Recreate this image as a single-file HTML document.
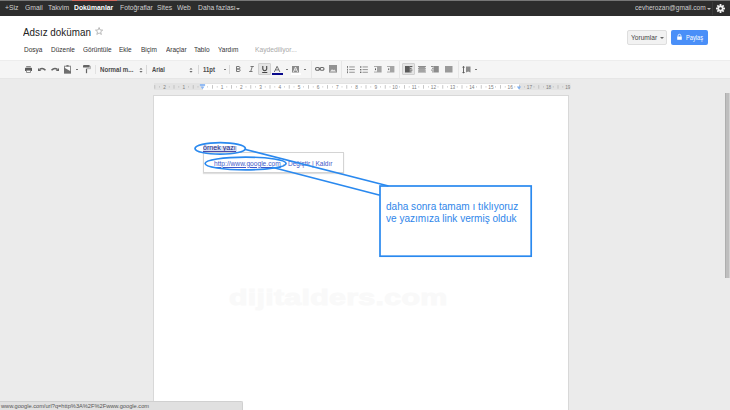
<!DOCTYPE html>
<html><head><meta charset="utf-8">
<style>
*{margin:0;padding:0;box-sizing:border-box}
html,body{width:730px;height:410px;overflow:hidden;background:#ebebeb;font-family:"Liberation Sans",sans-serif;position:relative}
.a{position:absolute;white-space:nowrap;line-height:1}
.b{position:absolute}
.sep{position:absolute;top:65px;width:1px;height:8.6px;background:#d8d8d8}
.sepf{position:absolute;top:60.5px;width:1px;height:17px;background:#e6e6e6}
.dd{position:absolute;width:0;height:0;border-left:2px solid transparent;border-right:2px solid transparent;border-top:2px solid #777}
svg{position:absolute;overflow:visible}
</style></head><body>
<div class="b" style="left:0;top:0;width:730px;height:16px;background:#2d2d2d"></div>
<div class="b" style="left:0;top:0;width:730px;height:1.2px;background:#777"></div>
<div class="b" style="left:71.5px;top:0;width:45px;height:1.4px;background:#d2695e"></div>
<span class="a" style="left:5px;top:4.2px;font-size:7.4px;color:#d0d0d0;transform:scaleX(0.919);transform-origin:0 0;">+Siz</span>
<span class="a" style="left:25px;top:4.2px;font-size:7.4px;color:#d0d0d0;transform:scaleX(0.919);transform-origin:0 0;">Gmail</span>
<span class="a" style="left:48px;top:4.2px;font-size:7.4px;color:#d0d0d0;transform:scaleX(0.919);transform-origin:0 0;">Takvim</span>
<span class="a" style="left:120px;top:4.2px;font-size:7.4px;color:#d0d0d0;transform:scaleX(0.919);transform-origin:0 0;">Fotoğraflar</span>
<span class="a" style="left:157px;top:4.2px;font-size:7.4px;color:#d0d0d0;transform:scaleX(0.919);transform-origin:0 0;">Sites</span>
<span class="a" style="left:177px;top:4.2px;font-size:7.4px;color:#d0d0d0;transform:scaleX(0.919);transform-origin:0 0;">Web</span>
<span class="a" style="left:198px;top:4.2px;font-size:7.4px;color:#d0d0d0;transform:scaleX(0.919);transform-origin:0 0;">Daha fazlası</span>
<span class="a" style="left:74px;top:4.2px;font-size:7.4px;color:#fff;transform:scaleX(0.919);transform-origin:0 0;font-weight:bold;">Dokümanlar</span>
<div class="dd" style="left:235.5px;top:8px;border-top-color:#bbb"></div>
<span class="a" style="left:634.8px;top:4.2px;font-size:7.4px;color:#d0d0d0;transform:scaleX(0.891);transform-origin:0 0;">cevherozan@gmail.com</span>
<div class="dd" style="left:706.5px;top:8px;border-top-color:#bbb"></div>
<div class="b" style="left:712px;top:2px;width:1px;height:13px;background:#3a3a3a"></div>
<svg style="left:715.5px;top:3.5px" width="9" height="9" viewBox="0 0 10 10"><g fill="#f0f0f0"><circle cx="5" cy="5" r="3.3"/><rect x="4" y="0" width="2" height="10" transform="rotate(0 5 5)"/><rect x="4" y="0" width="2" height="10" transform="rotate(45 5 5)"/><rect x="4" y="0" width="2" height="10" transform="rotate(90 5 5)"/><rect x="4" y="0" width="2" height="10" transform="rotate(135 5 5)"/></g><circle cx="5" cy="5" r="1.4" fill="#2d2d2d"/></svg>
<div class="b" style="left:0;top:16px;width:730px;height:44px;background:#fff"></div>
<span class="a" style="left:23px;top:26.5px;font-size:11px;color:#222;transform:scaleX(0.895);transform-origin:0 0;">Adsız doküman</span>
<svg style="left:95.4px;top:27.4px" width="8.2" height="8.2" viewBox="0 0 10 10"><path d="M5 .6 6.2 3.6 9.4 3.8 6.9 5.9 7.8 9.1 5 7.3 2.2 9.1 3.1 5.9.6 3.8 3.8 3.6Z" fill="none" stroke="#a8a8a8" stroke-width=".95" stroke-linejoin="round"/></svg>
<span class="a" style="left:24px;top:45.5px;font-size:7.3px;color:#333;transform:scaleX(0.89);transform-origin:0 0;">Dosya</span>
<span class="a" style="left:50.8px;top:45.5px;font-size:7.3px;color:#333;transform:scaleX(0.89);transform-origin:0 0;">Düzenle</span>
<span class="a" style="left:83px;top:45.5px;font-size:7.3px;color:#333;transform:scaleX(0.89);transform-origin:0 0;">Görüntüle</span>
<span class="a" style="left:119.2px;top:45.5px;font-size:7.3px;color:#333;transform:scaleX(0.89);transform-origin:0 0;">Ekle</span>
<span class="a" style="left:140.8px;top:45.5px;font-size:7.3px;color:#333;transform:scaleX(0.89);transform-origin:0 0;">Biçim</span>
<span class="a" style="left:165.5px;top:45.5px;font-size:7.3px;color:#333;transform:scaleX(0.89);transform-origin:0 0;">Araçlar</span>
<span class="a" style="left:194px;top:45.5px;font-size:7.3px;color:#333;transform:scaleX(0.89);transform-origin:0 0;">Tablo</span>
<span class="a" style="left:218.3px;top:45.5px;font-size:7.3px;color:#333;transform:scaleX(0.89);transform-origin:0 0;">Yardım</span>
<span class="a" style="left:255px;top:45.5px;font-size:7.3px;color:#aaa;transform:scaleX(0.92);transform-origin:0 0;">Kaydediliyor...</span>
<div class="b" style="left:627px;top:30px;width:40px;height:15px;background:#f2f2f2;border:1px solid #dedede;border-radius:2px"></div>
<span class="a" style="left:631px;top:34.2px;font-size:7.0px;color:#444;transform:scaleX(0.94);transform-origin:0 0;">Yorumlar</span>
<div class="dd" style="left:659.5px;top:37px;border-top-color:#666"></div>
<div class="b" style="left:671px;top:30px;width:37px;height:15px;background:#4a8ff8;border-radius:2px"></div>
<svg style="left:676.5px;top:33.8px" width="5" height="6" viewBox="0 0 5 6"><path d="M1.1 2.6V1.7a1.4 1.4 0 0 1 2.8 0v.9" fill="none" stroke="#fff" stroke-width=".8"/><rect x=".2" y="2.5" width="4.6" height="3.3" fill="#fff"/></svg>
<span class="a" style="left:685.6px;top:34.5px;font-size:6.3px;color:#fff;transform:scaleX(0.9);transform-origin:0 0;">Paylaş</span>
<div class="b" style="left:0;top:59.5px;width:730px;height:19.3px;background:#f5f5f5;border-top:1px solid #ededed;border-bottom:1px solid #e6e6e6"></div>
<svg style="left:24.9px;top:66px" width="7" height="7" viewBox="0 0 7 7"><rect x="1.2" y="0" width="4.6" height="1.3" fill="#8a8a8a"/><rect x="0" y="1.7" width="7" height="3.3" rx=".6" fill="#575757"/><rect x="1.6" y="4.2" width="3.8" height="2.2" fill="#f8f8f8" stroke="#7a7a7a" stroke-width=".8"/></svg>
<svg style="left:38px;top:66.8px" width="8" height="4" viewBox="0 0 8 4"><path d="M1.6 2.4Q4.6 .1 7.5 3.3" fill="none" stroke="#646464" stroke-width="1.5"/><path d="M0 .9 3.3 3.9 0 3.9Z" fill="#646464"/></svg>
<svg style="left:51px;top:66.8px" width="8" height="4" viewBox="0 0 8 4"><path d="M6.4 2.4Q3.4 .1 .5 3.3" fill="none" stroke="#646464" stroke-width="1.5"/><path d="M8 .9 4.7 3.9 8 3.9Z" fill="#646464"/></svg>
<svg style="left:64.1px;top:65.1px" width="7" height="8.4" viewBox="0 0 7 8.4"><rect x=".5" y="1.2" width="6" height="6.7" fill="#fafafa" stroke="#8a8a8a" stroke-width="1"/><rect x="2.4" y="0" width="2.2" height="1.6" fill="#777"/><path d="M0 2.6 7 6.6V8.4H0Z" fill="#6e6e6e"/></svg>
<div class="b" style="left:76px;top:69px;width:2px;height:1px;background:#777"></div>
<svg style="left:83px;top:65.4px" width="8" height="8.2" viewBox="0 0 8 8.2"><rect x="0" y="0" width="6.7" height="2.5" rx=".5" fill="#646464"/><path d="M6.7 1.2H7.4V3.7H3.5V4.3" fill="none" stroke="#9a9a9a" stroke-width=".8"/><rect x="2.9" y="4" width="1.2" height="4.2" fill="#646464"/></svg>
<div class="sep" style="left:95px;background:#e2e2e2"></div>
<span class="a" style="left:100.2px;top:66.5px;font-size:6.6px;color:#4a4a4a;transform:scaleX(0.93);transform-origin:0 0;font-weight:bold;">Normal m...</span>
<svg style="left:138.8px;top:66.5px" width="4" height="6" viewBox="0 0 4 6"><path d="M.4 2.5 2 1 3.6 2.5ZM.4 3.9 2 5.8 3.6 3.9Z" fill="#6a6a6a"/></svg>
<div class="sep" style="left:146px"></div>
<span class="a" style="left:151.6px;top:66.5px;font-size:6.6px;color:#4a4a4a;transform:scaleX(0.88);transform-origin:0 0;font-weight:bold;">Arial</span>
<svg style="left:188.8px;top:66.5px" width="4" height="6" viewBox="0 0 4 6"><path d="M.4 2.5 2 1 3.6 2.5ZM.4 3.9 2 5.8 3.6 3.9Z" fill="#6a6a6a"/></svg>
<div class="sep" style="left:197.5px"></div>
<span class="a" style="left:203px;top:66.5px;font-size:6.6px;color:#4a4a4a;transform:scaleX(0.9);transform-origin:0 0;font-weight:bold;">11pt</span>
<div class="b" style="left:224.2px;top:69px;width:2px;height:1px;background:#777"></div>
<div class="sep" style="left:228.8px"></div>
<svg style="left:235.8px;top:66.3px" width="5" height="6" viewBox="0 0 5 6"><path d="M.5 .5H3a1.3 1.3 0 0 1 0 2.5H.5ZM.5 3H3.2a1.3 1.3 0 0 1 0 2.5H.5Z" fill="none" stroke="#777" stroke-width="1"/></svg>
<svg style="left:249px;top:66.3px" width="5" height="6" viewBox="0 0 5 6"><path d="M1.5 .5H4.8M.2 5.5H3.5M3.3 .5 1.7 5.5" fill="none" stroke="#777" stroke-width="1"/></svg>
<div class="b" style="left:258.2px;top:63.2px;width:13.3px;height:12px;background:#e5e5e5;border:1px solid #d0d0d0;border-radius:1px"></div>
<svg style="left:262px;top:66px" width="5.5" height="7" viewBox="0 0 5.5 7"><path d="M.8 0V3.2a2 2 0 0 0 3.9 0V0" fill="none" stroke="#444" stroke-width="1.1"/><rect x=".2" y="6" width="5.1" height="1" fill="#444"/></svg>
<svg style="left:274.2px;top:65.8px" width="6.2" height="6" viewBox="0 0 6.2 6"><path d="M.3 6 3.1 .3 5.9 6M1.4 3.9H4.8" fill="none" stroke="#666" stroke-width=".9"/></svg>
<div class="b" style="left:272.2px;top:73px;width:10.7px;height:1.7px;background:#0a0a8c"></div>
<div class="b" style="left:285.8px;top:69px;width:2px;height:1px;background:#777"></div>
<svg style="left:292px;top:65.8px" width="7" height="7" viewBox="0 0 7 7"><rect x="0" y="0" width="7" height="6.5" fill="#8a8a8a"/><path d="M1.4 6 3.5 1 5.6 6M2.3 4H4.7" fill="none" stroke="#eee" stroke-width=".9"/></svg>
<div class="b" style="left:291px;top:73px;width:10px;height:1.7px;background:#fff"></div>
<div class="b" style="left:304px;top:69px;width:2px;height:1px;background:#777"></div>
<div class="sepf" style="left:310.5px"></div>
<svg style="left:314.7px;top:67.2px" width="9.5" height="3.8" viewBox="0 0 9.5 3.8"><rect x=".55" y=".55" width="3.9" height="2.7" rx="1.2" fill="none" stroke="#6a6a6a" stroke-width="1.1"/><rect x="5.05" y=".55" width="3.9" height="2.7" rx="1.2" fill="none" stroke="#6a6a6a" stroke-width="1.1"/><rect x="3.5" y="1.45" width="2.5" height=".9" fill="#6a6a6a"/></svg>
<svg style="left:328.9px;top:65.4px" width="8" height="7.6" viewBox="0 0 8 7.6"><rect x="0" y="0" width="8" height="7.6" fill="#929292"/><path d="M1 6.6 3 4.2 4.3 5.3 5.3 4.4 7 6.6Z" fill="#e6e6e6"/></svg>
<div class="sepf" style="left:341.4px"></div>
<svg style="left:346.8px;top:65.6px" width="7.8" height="7.2" viewBox="0 0 7.8 7.2"><g fill="#7a7a7a"><rect x="0" y="0" width="1" height="1.9"/><rect x="0" y="2.7" width="1" height="1.9"/><rect x="0" y="5.3" width="1" height="1.9"/></g><g fill="#8a8a8a"><rect x="2.2" y=".5" width="5.6" height=".9"/><rect x="2.2" y="3.2" width="5.6" height=".9"/><rect x="2.2" y="5.8" width="5.6" height=".9"/></g></svg>
<svg style="left:359.9px;top:65.6px" width="7.9" height="7.2" viewBox="0 0 7.9 7.2"><g fill="#6a6a6a"><rect x="0" y=".3" width="1.4" height="1.4"/><rect x="0" y="3" width="1.4" height="1.4"/><rect x="0" y="5.6" width="1.4" height="1.4"/></g><g fill="#8a8a8a"><rect x="2.5" y=".5" width="5.4" height=".9"/><rect x="2.5" y="3.2" width="5.4" height=".9"/><rect x="2.5" y="5.8" width="5.4" height=".9"/></g></svg>
<svg style="left:373.6px;top:66px" width="7.6" height="6.5" viewBox="0 0 7.6 6.5"><rect x="0" y="0" width="7.6" height="6.5" fill="#a4a4a4"/><rect x="0" y=".9" width="3" height="4.7" fill="#f3f3f3"/><rect x="1" y="2.4" width="1" height="1.7" fill="#555"/></svg>
<svg style="left:386.6px;top:66px" width="7.4" height="6.5" viewBox="0 0 7.4 6.5"><rect x="0" y="0" width="7.4" height="6.5" fill="#a4a4a4"/><rect x="0" y=".9" width="3" height="4.7" fill="#f3f3f3"/><rect x="1.2" y="2.4" width="1" height="1.7" fill="#555"/></svg>
<div class="sepf" style="left:399.3px"></div>
<div class="b" style="left:402px;top:63.2px;width:13.3px;height:12.3px;background:#e5e5e5;border:1px solid #d0d0d0;border-radius:1px"></div>
<svg style="left:404.8px;top:66px" width="7.4" height="6.5" viewBox="0 0 7.4 6.5"><rect x="0" y="0" width="4.8" height="6.5" fill="#5a5a5a"/><g fill="#5a5a5a"><rect x="4.8" y="0" width="2.6" height="1"/><rect x="4.8" y="1.8" width="1.8" height="1"/><rect x="4.8" y="3.6" width="2.6" height="1"/><rect x="4.8" y="5.4" width="1.8" height="1"/></g></svg>
<svg style="left:418px;top:66px" width="7.9" height="6.5" viewBox="0 0 7.9 6.5"><g fill="#8c8c8c"><rect x="0" y="0" width="7.9" height="1"/><rect x="1" y="1" width="5.9" height=".8"/><rect x="0" y="1.8" width="7.9" height="1"/><rect x="1" y="2.8" width="5.9" height=".8"/><rect x="0" y="3.6" width="7.9" height="1"/><rect x="1" y="4.6" width="5.9" height=".8"/><rect x="0" y="5.4" width="7.9" height="1.1"/></g></svg>
<svg style="left:430.8px;top:66px" width="7.8" height="6.5" viewBox="0 0 7.8 6.5"><g fill="#8c8c8c"><rect x="2.6" y="0" width="5.2" height="6.5"/><rect x="0" y="0" width="2.6" height="1"/><rect x="1" y="1.8" width="1.6" height="1"/><rect x="0" y="3.6" width="2.6" height="1"/><rect x="1" y="5.4" width="1.6" height="1"/></g></svg>
<svg style="left:444.8px;top:66px" width="7.5" height="6.5" viewBox="0 0 7.5 6.5"><rect x="0" y="0" width="7.5" height="6.5" fill="#9a9a9a"/></svg>
<div class="sepf" style="left:457.8px"></div>
<svg style="left:462px;top:65.5px" width="8.5" height="7.5" viewBox="0 0 8.5 7.5"><rect x="1.1" y=".5" width=".9" height="6.5" fill="#5a5a5a"/><path d="M0 1.6 1.55 0 3.1 1.6ZM0 5.9 1.55 7.5 3.1 5.9Z" fill="#5a5a5a"/><path d="M4 .6H8.5V6.5L6.2 5.4 4 6.5Z" fill="#8c8c8c"/></svg>
<div class="b" style="left:475px;top:69px;width:2px;height:1px;background:#777"></div>
<div class="b" style="left:154px;top:83.1px;width:416.5px;height:7.3px;background:#e3e3e3"></div>
<div class="b" style="left:203px;top:83.8px;width:315.8px;height:6.5px;background:#fff"></div>
<svg style="left:0;top:0" width="730" height="410"><g><rect x="154.40" y="85.1" width="0.8" height="3.6" fill="#b8b8b8"/><rect x="159.20" y="86.4" width="0.8" height="1" fill="#b0b0b0"/><text x="164.60" y="89" font-size="5.3" fill="#7c7c7c" text-anchor="middle" font-family="Liberation Sans" transform="translate(164.60 0) scale(0.9 1) translate(-164.60 0)">2</text><rect x="168.80" y="86.4" width="0.8" height="1" fill="#b0b0b0"/><rect x="173.60" y="85.1" width="0.8" height="3.6" fill="#b8b8b8"/><rect x="178.40" y="86.4" width="0.8" height="1" fill="#b0b0b0"/><text x="183.80" y="89" font-size="5.3" fill="#7c7c7c" text-anchor="middle" font-family="Liberation Sans" transform="translate(183.80 0) scale(0.9 1) translate(-183.80 0)">1</text><rect x="188.00" y="86.4" width="0.8" height="1" fill="#b0b0b0"/><rect x="192.80" y="85.1" width="0.8" height="3.6" fill="#b8b8b8"/><rect x="197.60" y="86.4" width="0.8" height="1" fill="#b0b0b0"/><rect x="207.20" y="86.4" width="0.8" height="1" fill="#b0b0b0"/><rect x="212.00" y="85.1" width="0.8" height="3.6" fill="#b8b8b8"/><rect x="216.80" y="86.4" width="0.8" height="1" fill="#b0b0b0"/><text x="222.20" y="89" font-size="5.3" fill="#7c7c7c" text-anchor="middle" font-family="Liberation Sans" transform="translate(222.20 0) scale(0.9 1) translate(-222.20 0)">1</text><rect x="226.40" y="86.4" width="0.8" height="1" fill="#b0b0b0"/><rect x="231.20" y="85.1" width="0.8" height="3.6" fill="#b8b8b8"/><rect x="236.00" y="86.4" width="0.8" height="1" fill="#b0b0b0"/><text x="241.40" y="89" font-size="5.3" fill="#7c7c7c" text-anchor="middle" font-family="Liberation Sans" transform="translate(241.40 0) scale(0.9 1) translate(-241.40 0)">2</text><rect x="245.60" y="86.4" width="0.8" height="1" fill="#b0b0b0"/><rect x="250.40" y="85.1" width="0.8" height="3.6" fill="#b8b8b8"/><rect x="255.20" y="86.4" width="0.8" height="1" fill="#b0b0b0"/><text x="260.60" y="89" font-size="5.3" fill="#7c7c7c" text-anchor="middle" font-family="Liberation Sans" transform="translate(260.60 0) scale(0.9 1) translate(-260.60 0)">3</text><rect x="264.80" y="86.4" width="0.8" height="1" fill="#b0b0b0"/><rect x="269.60" y="85.1" width="0.8" height="3.6" fill="#b8b8b8"/><rect x="274.40" y="86.4" width="0.8" height="1" fill="#b0b0b0"/><text x="279.80" y="89" font-size="5.3" fill="#7c7c7c" text-anchor="middle" font-family="Liberation Sans" transform="translate(279.80 0) scale(0.9 1) translate(-279.80 0)">4</text><rect x="284.00" y="86.4" width="0.8" height="1" fill="#b0b0b0"/><rect x="288.80" y="85.1" width="0.8" height="3.6" fill="#b8b8b8"/><rect x="293.60" y="86.4" width="0.8" height="1" fill="#b0b0b0"/><text x="299.00" y="89" font-size="5.3" fill="#7c7c7c" text-anchor="middle" font-family="Liberation Sans" transform="translate(299.00 0) scale(0.9 1) translate(-299.00 0)">5</text><rect x="303.20" y="86.4" width="0.8" height="1" fill="#b0b0b0"/><rect x="308.00" y="85.1" width="0.8" height="3.6" fill="#b8b8b8"/><rect x="312.80" y="86.4" width="0.8" height="1" fill="#b0b0b0"/><text x="318.20" y="89" font-size="5.3" fill="#7c7c7c" text-anchor="middle" font-family="Liberation Sans" transform="translate(318.20 0) scale(0.9 1) translate(-318.20 0)">6</text><rect x="322.40" y="86.4" width="0.8" height="1" fill="#b0b0b0"/><rect x="327.20" y="85.1" width="0.8" height="3.6" fill="#b8b8b8"/><rect x="332.00" y="86.4" width="0.8" height="1" fill="#b0b0b0"/><text x="337.40" y="89" font-size="5.3" fill="#7c7c7c" text-anchor="middle" font-family="Liberation Sans" transform="translate(337.40 0) scale(0.9 1) translate(-337.40 0)">7</text><rect x="341.60" y="86.4" width="0.8" height="1" fill="#b0b0b0"/><rect x="346.40" y="85.1" width="0.8" height="3.6" fill="#b8b8b8"/><rect x="351.20" y="86.4" width="0.8" height="1" fill="#b0b0b0"/><text x="356.60" y="89" font-size="5.3" fill="#7c7c7c" text-anchor="middle" font-family="Liberation Sans" transform="translate(356.60 0) scale(0.9 1) translate(-356.60 0)">8</text><rect x="360.80" y="86.4" width="0.8" height="1" fill="#b0b0b0"/><rect x="365.60" y="85.1" width="0.8" height="3.6" fill="#b8b8b8"/><rect x="370.40" y="86.4" width="0.8" height="1" fill="#b0b0b0"/><text x="375.80" y="89" font-size="5.3" fill="#7c7c7c" text-anchor="middle" font-family="Liberation Sans" transform="translate(375.80 0) scale(0.9 1) translate(-375.80 0)">9</text><rect x="380.00" y="86.4" width="0.8" height="1" fill="#b0b0b0"/><rect x="384.80" y="85.1" width="0.8" height="3.6" fill="#b8b8b8"/><rect x="389.60" y="86.4" width="0.8" height="1" fill="#b0b0b0"/><text x="395.00" y="89" font-size="5.3" fill="#7c7c7c" text-anchor="middle" font-family="Liberation Sans" transform="translate(395.00 0) scale(0.9 1) translate(-395.00 0)">10</text><rect x="399.20" y="86.4" width="0.8" height="1" fill="#b0b0b0"/><rect x="404.00" y="85.1" width="0.8" height="3.6" fill="#b8b8b8"/><rect x="408.80" y="86.4" width="0.8" height="1" fill="#b0b0b0"/><text x="414.20" y="89" font-size="5.3" fill="#7c7c7c" text-anchor="middle" font-family="Liberation Sans" transform="translate(414.20 0) scale(0.9 1) translate(-414.20 0)">11</text><rect x="418.40" y="86.4" width="0.8" height="1" fill="#b0b0b0"/><rect x="423.20" y="85.1" width="0.8" height="3.6" fill="#b8b8b8"/><rect x="428.00" y="86.4" width="0.8" height="1" fill="#b0b0b0"/><text x="433.40" y="89" font-size="5.3" fill="#7c7c7c" text-anchor="middle" font-family="Liberation Sans" transform="translate(433.40 0) scale(0.9 1) translate(-433.40 0)">12</text><rect x="437.60" y="86.4" width="0.8" height="1" fill="#b0b0b0"/><rect x="442.40" y="85.1" width="0.8" height="3.6" fill="#b8b8b8"/><rect x="447.20" y="86.4" width="0.8" height="1" fill="#b0b0b0"/><text x="452.60" y="89" font-size="5.3" fill="#7c7c7c" text-anchor="middle" font-family="Liberation Sans" transform="translate(452.60 0) scale(0.9 1) translate(-452.60 0)">13</text><rect x="456.80" y="86.4" width="0.8" height="1" fill="#b0b0b0"/><rect x="461.60" y="85.1" width="0.8" height="3.6" fill="#b8b8b8"/><rect x="466.40" y="86.4" width="0.8" height="1" fill="#b0b0b0"/><text x="471.80" y="89" font-size="5.3" fill="#7c7c7c" text-anchor="middle" font-family="Liberation Sans" transform="translate(471.80 0) scale(0.9 1) translate(-471.80 0)">14</text><rect x="476.00" y="86.4" width="0.8" height="1" fill="#b0b0b0"/><rect x="480.80" y="85.1" width="0.8" height="3.6" fill="#b8b8b8"/><rect x="485.60" y="86.4" width="0.8" height="1" fill="#b0b0b0"/><text x="491.00" y="89" font-size="5.3" fill="#7c7c7c" text-anchor="middle" font-family="Liberation Sans" transform="translate(491.00 0) scale(0.9 1) translate(-491.00 0)">15</text><rect x="495.20" y="86.4" width="0.8" height="1" fill="#b0b0b0"/><rect x="500.00" y="85.1" width="0.8" height="3.6" fill="#b8b8b8"/><rect x="504.80" y="86.4" width="0.8" height="1" fill="#b0b0b0"/><text x="510.20" y="89" font-size="5.3" fill="#7c7c7c" text-anchor="middle" font-family="Liberation Sans" transform="translate(510.20 0) scale(0.9 1) translate(-510.20 0)">16</text><rect x="514.40" y="86.4" width="0.8" height="1" fill="#b0b0b0"/><rect x="519.20" y="85.1" width="0.8" height="3.6" fill="#b8b8b8"/><rect x="524.00" y="86.4" width="0.8" height="1" fill="#b0b0b0"/><text x="529.40" y="89" font-size="5.3" fill="#7c7c7c" text-anchor="middle" font-family="Liberation Sans" transform="translate(529.40 0) scale(0.9 1) translate(-529.40 0)">17</text><rect x="533.60" y="86.4" width="0.8" height="1" fill="#b0b0b0"/><rect x="538.40" y="85.1" width="0.8" height="3.6" fill="#b8b8b8"/><rect x="543.20" y="86.4" width="0.8" height="1" fill="#b0b0b0"/><text x="548.60" y="89" font-size="5.3" fill="#7c7c7c" text-anchor="middle" font-family="Liberation Sans" transform="translate(548.60 0) scale(0.9 1) translate(-548.60 0)">18</text><rect x="552.80" y="86.4" width="0.8" height="1" fill="#b0b0b0"/><rect x="557.60" y="85.1" width="0.8" height="3.6" fill="#b8b8b8"/><rect x="562.40" y="86.4" width="0.8" height="1" fill="#b0b0b0"/><text x="567.80" y="89" font-size="5.3" fill="#7c7c7c" text-anchor="middle" font-family="Liberation Sans" transform="translate(567.80 0) scale(0.9 1) translate(-567.80 0)">19</text></g><rect x="570.5" y="80" width="30" height="13" fill="#ebebeb"/><rect x="199.9" y="84.1" width="5.2" height="1.8" fill="#8ab6f4"/><path d="M200.5 86.6H204.5L202.5 89.2Z" fill="#8ab6f4"/><path d="M516.8 86.6H521.2L519 89.4Z" fill="#7fb0f0"/></svg>
<div class="b" style="left:153px;top:94.5px;width:416px;height:330px;background:#fff;border:1px solid #d8d8d8"></div>
<div class="b" style="left:724.8px;top:93px;width:4.4px;height:185px;background:#bebebe;border-left:1px solid #aeaeae"></div>
<div class="b" style="left:729.2px;top:93px;width:0.8px;height:185px;background:#d2d2d2"></div>
<span class="a" style="left:229px;top:287.2px;font-size:21.7px;color:#f9f9f9;transform:scaleX(1.4);transform-origin:0 0;font-weight:bold;letter-spacing:0.2px;-webkit-text-stroke:0.9px #f9f9f9;">dijitalders.com</span>
<div class="b" style="left:202.7px;top:146px;width:34px;height:6.5px;background:#d3def3"></div>
<span class="a" style="left:203px;top:144.3px;font-size:7.4px;color:#262680;transform:scaleX(0.96);transform-origin:0 0;">örnek yazı</span>
<div class="b" style="left:203px;top:150.7px;width:32.7px;height:0.7px;background:#4a4aa8"></div>
<div class="b" style="left:203px;top:152.3px;width:140.5px;height:20.8px;background:#fff;border:1px solid #d4d4d4;box-shadow:0 1px 1px rgba(0,0,0,.12)"></div>
<span class="a" style="left:213.6px;top:160.5px;font-size:6.8px;color:#3f58c8;transform:scaleX(0.975);transform-origin:0 0;text-decoration:underline;">http://www.google.com</span>
<span class="a" style="left:283px;top:160.5px;font-size:6.8px;color:#999;transform:scaleX(0.96);transform-origin:0 0;">-</span>
<span class="a" style="left:287.8px;top:160.5px;font-size:6.8px;color:#3f58c8;transform:scaleX(0.96);transform-origin:0 0;">Değiştir | Kaldır</span>
<svg style="left:0;top:0" width="730" height="410" viewBox="0 0 730 410">
  <g fill="none" stroke="#2a89ef" stroke-width="1.7">
    <ellipse cx="220.2" cy="148.4" rx="25.2" ry="5.8"/>
    <ellipse cx="245.6" cy="163.5" rx="40.5" ry="6.4"/>
    <path d="M244.5 149.2 388.5 186"/>
    <path d="M272 167.3 380 195.3"/>
    <rect x="380" y="186" width="151.2" height="70.2"/>
  </g>
</svg>
<span class="a" style="left:386px;top:200.8px;font-size:10.2px;color:#2f86ea;line-height:11.7px;transform:scaleX(0.985);transform-origin:0 0">daha sonra tamam ı tıklıyoruz<br>ve yazımıza link vermiş olduk</span>
<div class="b" style="left:0;top:400.8px;width:243px;height:10px;background:#e0e0e0;border-top:1px solid #d0d0d0;border-right:1px solid #d0d0d0;border-top-right-radius:2px"></div>
<span class="a" style="left:1px;top:403.8px;font-size:5.68px;color:#555;">www.google.com/url?q=http%3A%2F%2Fwww.google.com</span>
</body></html>
